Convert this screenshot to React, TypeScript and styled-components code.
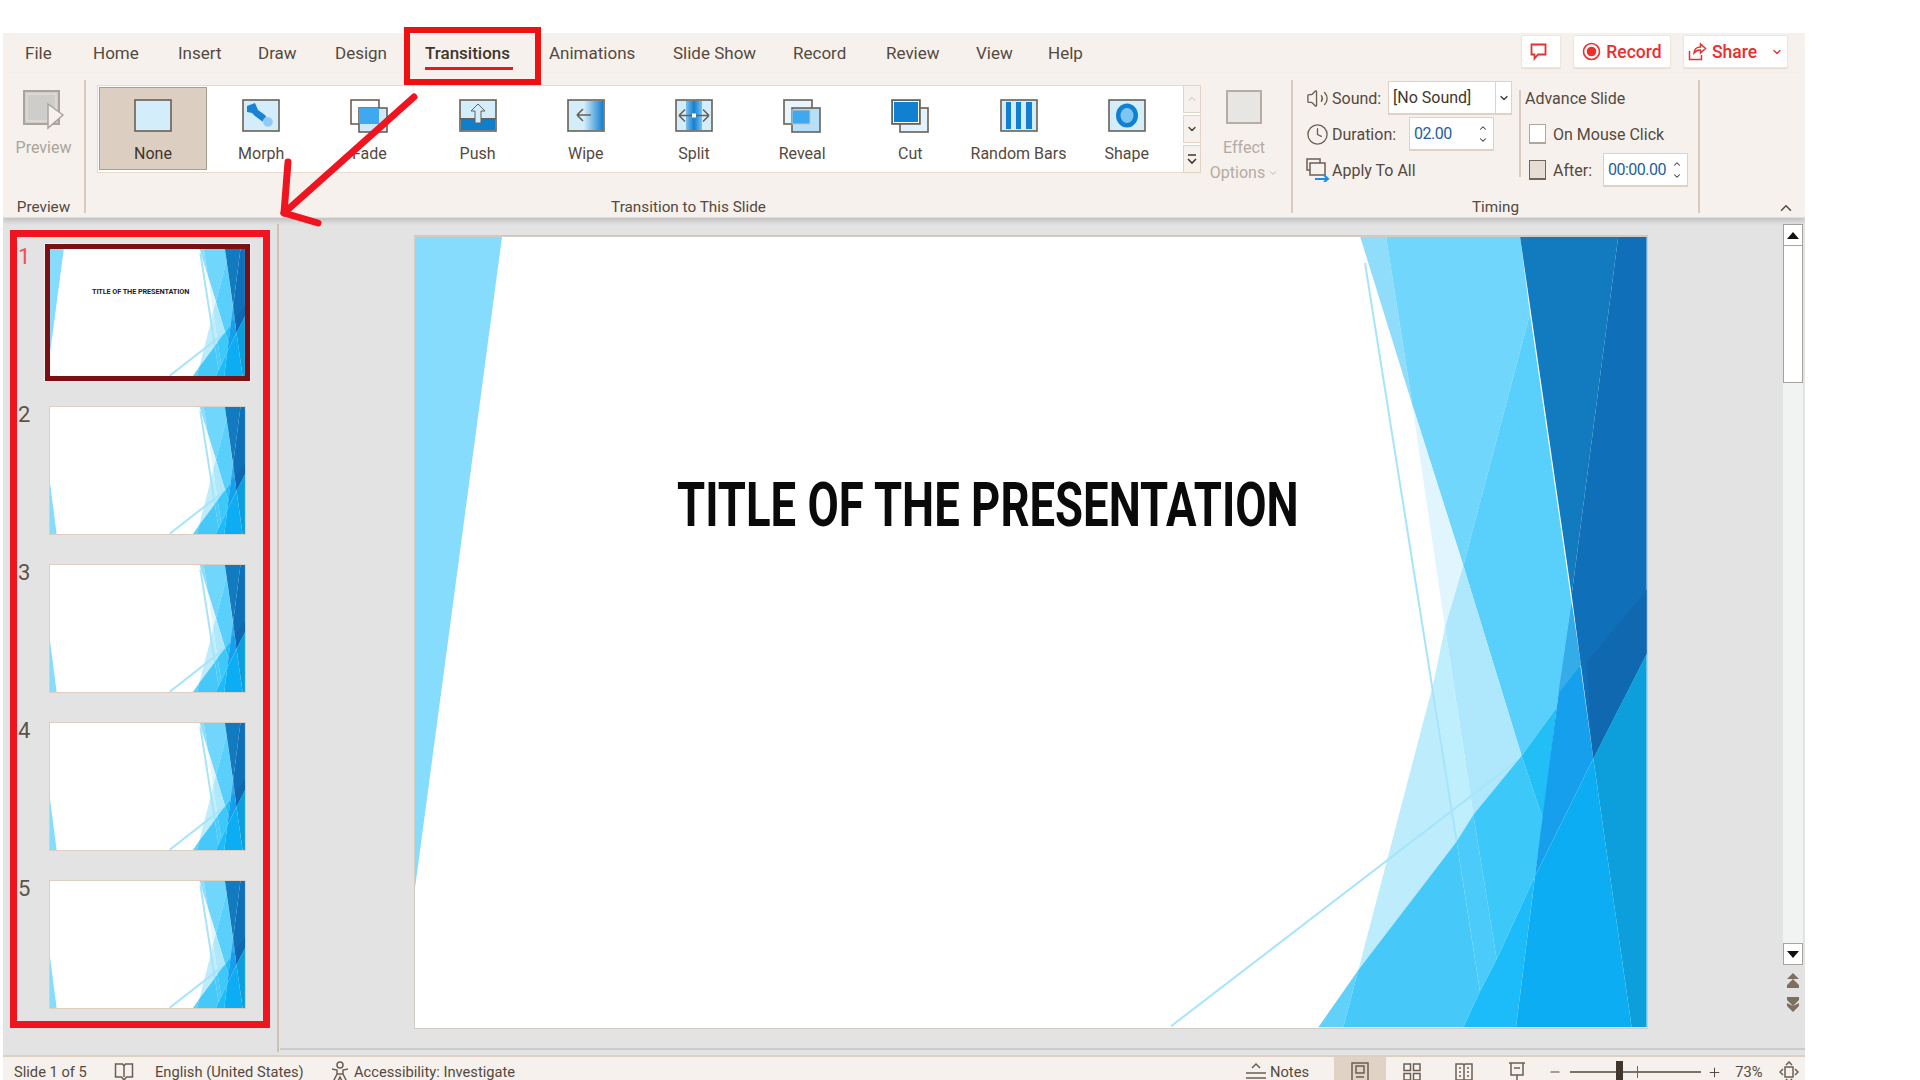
import React from "react"
import styled, { createGlobalStyle } from "styled-components"
import { ChevronDown, ChevronUp, Clock, Minus, Plus, Volume2 } from "lucide-react"

const GlobalStyle = createGlobalStyle`
  html, body {
    margin: 0;
    background: #fff;
    overflow: hidden;
  }
  * { box-sizing: border-box; }
`

const RIBBON = "#f6f1ec"
const INK = "#54493f"
const EDGE = "#d8cabd"

const Page = styled.div`
  position: relative;
  width: 1920px;
  height: 1080px;
  padding: 33px 0 0 3px;
  font-family: Roboto, "Liberation Sans", sans-serif;
  color: ${INK};
  font-size: 17px;
  overflow: hidden;
`
const App = styled.div`
  width: 1802px;
  height: 1047px;
  display: flex;
  flex-direction: column;
  overflow: hidden;
`

/* tabs */
const TabBar = styled.div`
  height: 40px;
  flex: none;
  background: ${RIBBON};
  display: flex;
  align-items: center;
  padding: 0 17px 0 22px;
`
const Tab = styled.div<{ $w?: number; $active?: boolean }>`
  width: ${(p) => (p.$w ? `${p.$w}px` : "auto")};
  font-size: 17px;
  line-height: 40px;
  flex: none;
  position: relative;
  color: ${(p) => (p.$active ? "#40362e" : INK)};
  font-weight: ${(p) => (p.$active ? 500 : 400)};
`
const TabUnderline = styled.span`
  position: absolute;
  left: 0;
  top: 34px;
  width: 88px;
  height: 3px;
  background: #e01b22;
`
const TopActions = styled.div`
  margin-left: auto;
  display: flex;
  gap: 12px;
  align-self: flex-start;
  padding-top: 2px;
`
const TopButton = styled.div<{ $w: number; $nudge?: number }>`
  width: ${(p) => p.$w}px;
  height: 33px;
  background: #fff;
  border: 1px solid #efe6dd;
  border-radius: 2px;
  box-shadow: 0 1px 1px #e6dbd0;
  display: flex;
  align-items: center;
  justify-content: center;
  gap: 5px;
  padding-right: ${(p) => p.$nudge ?? 0}px;
  color: #e8302e;
  font-size: 17.5px;
  font-weight: 500;
`

/* ribbon */
const Ribbon = styled.div`
  height: 145px;
  flex: none;
  background: ${RIBBON};
  display: flex;
  position: relative;
  z-index: 1;
  border-bottom: 1px solid #eadfd4;
  box-shadow: 0 3px 5px rgba(0, 0, 0, 0.16);
`
const Sep = styled.div<{ $top?: number; $h?: number }>`
  width: 2px;
  flex: none;
  margin-top: ${(p) => p.$top ?? 7}px;
  height: ${(p) => p.$h ?? 133}px;
  background: ${EDGE};
`
const Group = styled.div<{ $w: number }>`
  width: ${(p) => p.$w}px;
  flex: none;
  display: flex;
  flex-direction: column;
  justify-content: space-between;
`
const GroupLabel = styled.div`
  text-align: center;
  font-size: 15.3px;
  line-height: 20px;
  height: 20px;
`
const PreviewButton = styled.div`
  display: flex;
  flex-direction: column;
  align-items: center;
  padding-top: 17px;
  gap: 8px;
  color: #aaa49d;
  font-size: 16px;
  line-height: 20px;
`
const TransitionRow = styled.div`
  display: flex;
  padding: 12px 0 0 11px;
`
const Gallery = styled.div`
  width: 1104px;
  height: 88px;
  background: #fff;
  border: 1px solid #e7dbcf;
  padding: 2px 0 2px 2px;
  display: flex;
`
const GalleryGrid = styled.div`
  display: grid;
  grid-template-columns: repeat(10, 108.2px);
  width: 1082px;
  flex: none;
`
const GalleryItem = styled.div<{ $selected?: boolean }>`
  width: 106px;
  height: 81px;
  display: flex;
  flex-direction: column;
  align-items: center;
  padding-top: 11px;
  gap: 11px;
  font-size: 16px;
  line-height: 20px;
  white-space: nowrap;
  background: ${(p) => (p.$selected ? "#dccec1" : "transparent")};
  outline: ${(p) => (p.$selected ? "1px solid #ab9d8f" : "none")};
  color: ${(p) => (p.$selected ? "#3e342c" : INK)};
`
const GalleryScroll = styled.div`
  margin: -3px -1px -3px auto;
  width: 18px;
  display: flex;
  flex-direction: column;
  gap: 2px;
`
const ScrollStep = styled.div<{ $muted?: boolean }>`
  height: 28px;
  background: ${RIBBON};
  border: 1px solid #e2d5c8;
  display: flex;
  align-items: center;
  justify-content: center;
  color: ${(p) => (p.$muted ? "#c4bcb4" : "#40362e")};
`
const EffectOptions = styled.div`
  width: 86px;
  display: flex;
  flex-direction: column;
  align-items: center;
  padding-top: 5px;
  color: #b3aba3;
  font-size: 16px;
  line-height: 24.5px;
`
const EffectIcon = styled.div`
  width: 36px;
  height: 34px;
  background: #e8e6e3;
  border: 2px solid #b6aea6;
  margin-bottom: 12px;
`
const OptionsLine = styled.div`
  display: flex;
  align-items: center;
  gap: 3px;
`

/* timing */
const TimingBody = styled.div`
  display: flex;
  padding-left: 13px;
`
const TimingCol = styled.div<{ $w: number }>`
  width: ${(p) => p.$w}px;
  flex: none;
  padding-top: 8px;
  display: flex;
  flex-direction: column;
  gap: 2px;
`
const TimingRow = styled.div<{ $indent?: number }>`
  height: 34px;
  display: flex;
  align-items: center;
  padding-left: ${(p) => p.$indent ?? 0}px;
  font-size: 16px;
`
const RowIcon = styled.span`
  width: 26px;
  flex: none;
  display: flex;
  align-items: center;
`
const RowLabel = styled.span<{ $w?: number }>`
  width: ${(p) => (p.$w ? `${p.$w}px` : "auto")};
  flex: none;
`
const Field = styled.div<{ $w: number; $blue?: boolean }>`
  width: ${(p) => p.$w}px;
  height: 34px;
  background: #fff;
  border: 1px solid #dfd2c5;
  border-bottom-width: 2px;
  display: flex;
  align-items: center;
  padding-left: 4px;
  font-size: 16px;
  letter-spacing: ${(p) => (p.$blue ? "-0.5px" : "0")};
  color: ${(p) => (p.$blue ? "#1f5f9c" : "#40362e")};
`
const FieldDrop = styled.span`
  margin-left: auto;
  width: 16px;
  height: 100%;
  border-left: 1px solid #dfd2c5;
  display: flex;
  align-items: center;
  justify-content: center;
  color: #40362e;
`
const Spinner = styled.span`
  margin-left: auto;
  width: 20px;
  display: flex;
  flex-direction: column;
  align-items: center;
  gap: 2px;
  color: #40362e;
`
const Check = styled.span<{ $on?: boolean }>`
  width: 17px;
  height: 20px;
  flex: none;
  margin-right: 7px;
  background: ${(p) => (p.$on ? "#e6ddd4" : "#fff")};
  border: 1px solid ${(p) => (p.$on ? "#6f655b" : "#b0a69c")};
  border-bottom-width: 2px;
`
const CollapseSlot = styled.div`
  flex: 1;
  display: flex;
  align-items: flex-end;
  padding: 0 0 0 77px;
  color: #54493f;
`

/* body */
const Workspace = styled.div`
  height: 837px;
  flex: none;
  background: #e3e3e3;
  display: flex;
`
const ThumbPanel = styled.div`
  width: 276px;
  flex: none;
  padding: 12px 0 0 7px;
  border-right: 2px solid #cbc3ba;
  margin-top: 6px;
  margin-bottom: 3px;
`
const ThumbFrame = styled.div`
  width: 260px;
  height: 798px;
  margin-top: -6px;
  border: 7px solid #ee1520;
  padding: 7px 0 0 28px;
  display: flex;
  flex-direction: column;
  gap: 21px;
`
const ThumbRow = styled.div`
  position: relative;
  display: flex;
`
const ThumbNumber = styled.span<{ $active?: boolean }>`
  position: absolute;
  left: -27px;
  top: 0;
  font-size: 22px;
  line-height: 26px;
  color: ${(p) => (p.$active ? "#f0504f" : "#5d5249")};
`
const Thumb = styled.div<{ $active?: boolean }>`
  width: 205px;
  height: 137px;
  border: 5px solid ${(p) => (p.$active ? "#7a1014" : "transparent")};
  box-shadow: ${(p) => (p.$active ? "0 0 0 1px #efefef" : "none")};
`
const ThumbSlide = styled.div<{ $active?: boolean }>`
  position: relative;
  width: 195px;
  height: 127px;
  background: #fff;
  outline: ${(p) => (p.$active ? "none" : "1px solid #dccfc2")};
`
const ThumbTitle = styled.div`
  position: absolute;
  left: 42px;
  top: 39px;
  font-size: 7.3px;
  line-height: 8px;
  font-weight: 700;
  white-space: nowrap;
  color: #1d1d2b;
  letter-spacing: -0.1px;
`
const Stage = styled.div`
  flex: 1;
  min-width: 0;
  display: flex;
  flex-direction: column;
  height: 832px;
  border-bottom: 2px solid #cbcbcb;
  margin-left: 1px;
`
const StageBody = styled.div`
  flex: 1;
  display: flex;
  padding-left: 135px;
`
const Slide = styled.div`
  position: relative;
  width: 1232px;
  height: 791px;
  margin-top: 19px;
  background: #fff;
  box-shadow: 0 0 0 1px #d2ccc5, 0 -1px 0 1px #c9c9c9;
`
const ArtSvg = styled.svg`
  position: absolute;
  inset: 0;
  width: 100%;
  height: 100%;
  display: block;
`
const SlideTitle = styled.div`
  position: absolute;
  left: 262px;
  top: 242px;
  font-size: 49px;
  line-height: 54px;
  font-weight: 700;
  color: #0a0a0a;
  white-space: nowrap;
  transform: scale(0.928, 1.24);
  transform-origin: left center;
`
const ScrollBar = styled.div`
  width: 20px;
  margin-left: 136px;
  padding-top: 6px;
  display: flex;
  flex-direction: column;
`
const ScrollArrow = styled.div`
  height: 22px;
  background: #fff;
  border: 1px solid #a8a29c;
  display: flex;
  align-items: center;
  justify-content: center;
`
const ScrollThumb = styled.div`
  height: 137px;
  background: #fff;
  border: 1px solid #a8a29c;
  border-top: none;
`
const ScrollTrack = styled.div`
  height: 560px;
  background: #f1f3f3;
`
const PageJumps = styled.div`
  display: flex;
  flex-direction: column;
  align-items: center;
  gap: 9px;
  padding-top: 8px;
`

/* status bar */
const StatusBar = styled.div`
  height: 25px;
  flex: none;
  background: ${RIBBON};
  border-top: 2px solid #dccfc3;
  display: flex;
  padding: 0 4px 0 11px;
  font-size: 14.7px;
  line-height: 14px;
  align-items: stretch;
`
const StatusItem = styled.div<{ $w?: number; $center?: boolean; $active?: boolean }>`
  width: ${(p) => (p.$w ? `${p.$w}px` : "auto")};
  flex: none;
  display: flex;
  align-items: center;
  gap: 3px;
  white-space: nowrap;
  padding-top: 7px;
  justify-content: ${(p) => (p.$center ? "center" : "flex-start")};
  background: ${(p) => (p.$active ? "#e0d2c5" : "transparent")};
`
const StatusRight = styled.div`
  margin-left: auto;
  display: flex;
`
const ZoomTrack = styled.div`
  position: relative;
  width: 131px;
  height: 2px;
  background: #7d7267;
  align-self: center;
  margin: 7px 5px 0 4px;
`
const ZoomKnob = styled.span`
  position: absolute;
  left: 46px;
  top: -10px;
  width: 7px;
  height: 22px;
  background: #40362e;
`
const ZoomTick = styled.span`
  position: absolute;
  left: 67px;
  top: -5px;
  width: 1px;
  height: 12px;
  background: #6d6258;
`

/* red annotations */
const TabHighlight = styled.div`
  position: absolute;
  z-index: 2;
  left: 404px;
  top: 27px;
  width: 137px;
  height: 58px;
  border: 6px solid #ee1111;
  pointer-events: none;
`
const ArrowSvg = styled.svg`
  position: absolute;
  z-index: 2;
  left: 270px;
  top: 90px;
`

const Frame = ({ x = 1, y = 1, w = 36, h = 31, fill = "#d3edfb" }) => (
  <rect x={x} y={y} width={w} height={h} fill={fill} stroke="#6b5f54" strokeWidth="1.6" />
)

const TransitionIcon = ({ kind }: { kind: string }) => {
  let inner: React.ReactNode = <Frame />
  if (kind === "Morph")
    inner = (
      <>
        <Frame />
        <path d="M5 7l8-3 3 7 7 5 2 3-4 4-8-6-3-3-5-1z" fill="#1b82d2" />
        <circle cx="26" cy="23" r="5" fill="#8fcbf3" stroke="#d3edfb" strokeDasharray="1 1" />
      </>
    )
  if (kind === "Fade")
    inner = (
      <>
        <rect x="1" y="1" width="28" height="24" fill="#fff" stroke="#6b5f54" strokeWidth="1.6" />
        <rect x="9" y="9" width="28" height="24" fill="#cde9fb" stroke="#6b5f54" strokeWidth="1.6" />
        <rect x="9" y="9" width="20" height="16" fill="#3fa9ef" />
      </>
    )
  if (kind === "Push")
    inner = (
      <>
        <Frame />
        <rect x="2" y="19" width="34" height="12" fill="#0f7fcd" />
        <rect x="1" y="19" width="36" height="1.5" fill="#6b5f54" />
        <path d="M19 5l7 7h-4v12h-6V12h-4z" fill="#d3edfb" stroke="#6b5f54" />
      </>
    )
  if (kind === "Wipe")
    inner = (
      <>
        <defs>
          <linearGradient id="wipe-fill">
            <stop offset="0" stopColor="#d3edfb" />
            <stop offset="1" stopColor="#1280d0" />
          </linearGradient>
        </defs>
        <Frame />
        <rect x="17" y="2" width="19" height="29" fill="url(#wipe-fill)" />
        <path d="M10 16l6-6M10 16l6 6M10 16h14" stroke="#6b5f54" strokeWidth="1.6" fill="none" />
      </>
    )
  if (kind === "Split")
    inner = (
      <>
        <defs>
          <linearGradient id="split-fill">
            <stop offset="0" stopColor="#7cc1ef" />
            <stop offset="0.5" stopColor="#1280d0" />
            <stop offset="1" stopColor="#7cc1ef" />
          </linearGradient>
        </defs>
        <Frame />
        <rect x="11" y="2" width="16" height="29" fill="url(#split-fill)" />
        <path d="M4 16.5h30M4 16.5l6-6M4 16.5l6 6M34 16.5l-6-6M34 16.5l-6 6" stroke="#6b5f54" strokeWidth="1.6" fill="none" />
        <rect x="17" y="14.500" width="4" height="4" fill="#fff" />
      </>
    )
  if (kind === "Reveal")
    inner = (
      <>
        <rect x="1" y="1" width="28" height="24" fill="#e8f5fd" stroke="#6b5f54" strokeWidth="1.6" />
        <rect x="9" y="9" width="28" height="24" fill="#b5e0f9" stroke="#6b5f54" strokeWidth="1.6" />
        <rect x="9" y="11" width="18" height="14" fill="#3fa9ef" stroke="#c9c0b6" />
      </>
    )
  if (kind === "Cut")
    inner = (
      <>
        <rect x="9" y="9" width="28" height="24" fill="#e3f3fd" stroke="#6b5f54" strokeWidth="1.6" />
        <rect x="1" y="1" width="28" height="24" fill="#1280d0" stroke="#6b5f54" strokeWidth="1.6" />
        <rect x="2.5" y="2.5" width="25" height="21" fill="none" stroke="#fff" strokeWidth="1" />
      </>
    )
  if (kind === "Random Bars")
    inner = (
      <>
        <Frame />
        <rect x="6" y="3" width="5" height="27" fill="#1280d0" />
        <rect x="16" y="3" width="5" height="27" fill="#1280d0" />
        <rect x="26" y="3" width="6" height="27" fill="#1280d0" />
      </>
    )
  if (kind === "Shape")
    inner = (
      <>
        <Frame />
        <ellipse cx="19" cy="16.5" rx="11" ry="12" fill="#1280d0" />
        <ellipse cx="19" cy="16.5" rx="6.5" ry="7.5" fill="#7cc6f2" />
      </>
    )
  return (
    <svg width="38" height="34" viewBox="0 0 38 34">
      {inner}
    </svg>
  )
}

const SlideArt = ({ leftBar }: { leftBar: "top" | "bottom" }) => (
  <ArtSvg viewBox="0 0 1232 791" preserveAspectRatio="none">
    {leftBar === "top" ? (
      <polygon points="0,0 87,0 0,651" fill="#86dcfd" />
    ) : (
      <polygon points="0,473 42,791 0,791" fill="#86dcfd" />
    )}
    <g transform="translate(885 -17) scale(0.3333 0.5357)">
      <polygon points="180,30 258,30 337,345" fill="#8fddfb" />
      <polygon points="258,30 660,30 690,175 490,645 337,345" fill="#71d6fb" />
      <polygon points="337,345 490,645 435,760" fill="#e0f5fe" />
      <polygon points="690,175 815,715 770,910 665,1000 490,645" fill="#59cffb" />
      <polygon points="490,645 665,1000 520,1110 435,760" fill="#afe8fc" />
      <polygon points="400,865 435,760 520,1110 470,1160" fill="#bfeefd" />
      <polygon points="400,865 470,1160 175,1400" fill="#bdecfd" />
      <line x1="195" y1="80" x2="470" y2="1160" stroke="#a6e4fb" strokeWidth="2" vectorEffect="non-scaling-stroke" />
      <line x1="-387" y1="1505" x2="650" y2="1010" stroke="#a6e4fb" strokeWidth="2" vectorEffect="non-scaling-stroke" />
      <polygon points="55,1507 130,1507 175,1400" fill="#62d1f9" />
      <polygon points="130,1507 175,1400 470,1160 540,1440 490,1507" fill="#46c9f9" />
      <polygon points="470,1160 520,1110 590,1380 540,1440" fill="#4bcbfa" />
      <polygon points="520,1110 665,1000 730,1120 705,1225 590,1380" fill="#3dc8fa" />
      <polygon points="665,1000 770,910 730,1120" fill="#22bef6" />
      <polygon points="815,715 880,1005 705,1225 770,910" fill="#159fec" />
      <polygon points="815,715 843,830 775,885" fill="#33ace9" />
      <polygon points="660,30 955,30 815,700" fill="#127bc0" />
      <polygon points="955,30 1040,30 1040,810 880,1005 815,700" fill="#0f70b9" />
      <polygon points="860,825 1040,690 1040,810 880,1005" fill="#1069b0" />
      <polygon points="880,1005 1040,810 1040,1507 995,1507" fill="#0c9fdc" />
      <polygon points="880,1005 995,1507 648,1507 705,1225" fill="#0cadf2" />
      <polygon points="705,1225 648,1507 490,1507 540,1440 590,1380" fill="#1bbcf9" />
    </g>
  </ArtSvg>
)

const Glyph = ({ w, h, children }: { w: number; h: number; children: React.ReactNode }) => (
  <svg width={w} height={h} viewBox={`0 0 ${w} ${h}`} fill="none" stroke="#6b5f54" strokeWidth="1.5">
    {children}
  </svg>
)

const tabs: [string, number][] = [
  ["File", 68],
  ["Home", 85],
  ["Insert", 80],
  ["Draw", 77],
  ["Design", 90],
  ["Transitions", 124],
  ["Animations", 124],
  ["Slide Show", 120],
  ["Record", 93],
  ["Review", 90],
  ["View", 72],
  ["Help", 60],
]
const transitions = ["None", "Morph", "Fade", "Push", "Wipe", "Split", "Reveal", "Cut", "Random Bars", "Shape"]

const App_ = () => {
  return (
    <Page>
      <GlobalStyle />
      <App>
        <TabBar>
          {tabs.map(([name, w]) => (
            <Tab key={name} $w={w} $active={name === "Transitions"}>
              {name}
              {name === "Transitions" && <TabUnderline />}
            </Tab>
          ))}
          <TopActions>
            <TopButton $w={40} $nudge={5}>
              <svg width="17" height="18" viewBox="0 0 17 18" fill="none" stroke="#e8302e" strokeWidth="1.8">
                <path d="M1.5 1.5h14v10H8l-3.500 4v-4h-3z" />
              </svg>
            </TopButton>
            <TopButton $w={98}>
              <svg width="19" height="19" viewBox="0 0 19 19">
                <circle cx="9.500" cy="9.500" r="8" fill="none" stroke="#e8302e" strokeWidth="1.600" />
                <circle cx="9.500" cy="9.500" r="4.800" fill="#e8302e" />
              </svg>
              Record
            </TopButton>
            <TopButton $w={105}>
              <svg width="19" height="19" viewBox="0 0 19 19" fill="none" stroke="#e8302e" strokeWidth="1.500">
                <path d="M1.500 9v8.500h12V13M6 11c0-4 3-6 6.500-6V2l5 4.500-5 4.500V8C9.500 8 7.500 9 6 11z" />
              </svg>
              Share
              <ChevronDown size={12} strokeWidth={2.500} style={{ marginLeft: 9 }} />
            </TopButton>
          </TopActions>
        </TabBar>

        <Ribbon>
          <Group $w={81}>
            <PreviewButton>
              <svg width="42" height="40" viewBox="0 0 42 40">
                <rect x="1" y="1" width="35" height="33" fill="#cfcdca" stroke="#aaa49d" strokeWidth="2" />
                <rect x="4" y="4" width="29" height="27" fill="none" stroke="#e5e2de" />
                <path d="M25 14l15 11-15 13z" fill="#f6f1ec" stroke="#aaa49d" strokeWidth="1.500" />
              </svg>
              Preview
            </PreviewButton>
            <GroupLabel>Preview</GroupLabel>
          </Group>
          <Sep />
          <Group $w={1205}>
            <TransitionRow>
              <Gallery>
                <GalleryGrid>
                  {transitions.map((name) => (
                    <GalleryItem key={name} $selected={name === "None"}>
                      <TransitionIcon kind={name} />
                      {name}
                    </GalleryItem>
                  ))}
                </GalleryGrid>
                <GalleryScroll>
                  <ScrollStep $muted>
                    <ChevronUp size={12} strokeWidth={2} />
                  </ScrollStep>
                  <ScrollStep>
                    <ChevronDown size={12} strokeWidth={2.500} />
                  </ScrollStep>
                  <ScrollStep>
                    <svg width="12" height="13" viewBox="0 0 12 13" fill="none" stroke="#40362e" strokeWidth="1.600">
                      <path d="M2 2h8M2 6l4 4 4-4" />
                    </svg>
                  </ScrollStep>
                </GalleryScroll>
              </Gallery>
              <EffectOptions>
                <EffectIcon />
                Effect
                <OptionsLine>
                  Options
                  <ChevronDown size={10} strokeWidth={2} />
                </OptionsLine>
              </EffectOptions>
            </TransitionRow>
            <GroupLabel>Transition to This Slide</GroupLabel>
          </Group>
          <Sep />
          <Group $w={405}>
            <TimingBody>
              <TimingCol $w={213}>
                <TimingRow>
                  <RowIcon>
                    <Volume2 size={23} strokeWidth={1.400} color="#6b5f54" />
                  </RowIcon>
                  <RowLabel $w={56}>Sound:</RowLabel>
                  <Field $w={124}>
                    [No Sound]
                    <FieldDrop>
                      <ChevronDown size={12} strokeWidth={2.500} />
                    </FieldDrop>
                  </Field>
                </TimingRow>
                <TimingRow>
                  <RowIcon>
                    <Clock size={23} strokeWidth={1.400} color="#6b5f54" />
                  </RowIcon>
                  <RowLabel $w={77}>Duration:</RowLabel>
                  <Field $w={85} $blue>
                    02.00
                    <Spinner>
                      <ChevronUp size={10} strokeWidth={2.500} />
                      <ChevronDown size={10} strokeWidth={2.500} />
                    </Spinner>
                  </Field>
                </TimingRow>
                <TimingRow>
                  <RowIcon>
                    <Glyph w={24} h={24}>
                      <rect x="1" y="1" width="13" height="11" />
                      <rect x="4" y="5" width="15" height="12" fill="#f6f1ec" />
                      <path d="M9 21h13M18 17l4 4-4 3" stroke="#1b8fe6" strokeWidth="2" />
                    </Glyph>
                  </RowIcon>
                  <RowLabel>Apply To All</RowLabel>
                </TimingRow>
              </TimingCol>
              <Sep $top={17} $h={87} />
              <TimingCol $w={170}>
                <TimingRow $indent={4}>
                  <RowLabel>Advance Slide</RowLabel>
                </TimingRow>
                <TimingRow $indent={8}>
                  <Check />
                  <RowLabel>On Mouse Click</RowLabel>
                </TimingRow>
                <TimingRow $indent={8}>
                  <Check $on />
                  <RowLabel $w={50}>After:</RowLabel>
                  <Field $w={85} $blue>
                    00:00.00
                    <Spinner>
                      <ChevronUp size={10} strokeWidth={2.500} />
                      <ChevronDown size={10} strokeWidth={2.500} />
                    </Spinner>
                  </Field>
                </TimingRow>
              </TimingCol>
            </TimingBody>
            <GroupLabel>Timing</GroupLabel>
          </Group>
          <Sep />
          <CollapseSlot>
            <ChevronUp size={18} strokeWidth={2} />
          </CollapseSlot>
        </Ribbon>

        <Workspace>
          <ThumbPanel>
            <ThumbFrame>
              {[1, 2, 3, 4, 5].map((n) => (
                <ThumbRow key={n}>
                  <ThumbNumber $active={n === 1}>{n}</ThumbNumber>
                  <Thumb $active={n === 1}>
                    <ThumbSlide $active={n === 1}>
                      <SlideArt leftBar={n === 1 ? "top" : "bottom"} />
                      {n === 1 && <ThumbTitle>TITLE OF THE PRESENTATION</ThumbTitle>}
                    </ThumbSlide>
                  </Thumb>
                </ThumbRow>
              ))}
            </ThumbFrame>
          </ThumbPanel>
          <Stage>
            <StageBody>
              <Slide>
                <SlideArt leftBar="top" />
                <SlideTitle>TITLE OF THE PRESENTATION</SlideTitle>
              </Slide>
              <ScrollBar>
                <ScrollArrow>
                  <svg width="12" height="7" viewBox="0 0 12 7">
                    <path d="M6 0l6 7H0z" fill="#111" />
                  </svg>
                </ScrollArrow>
                <ScrollThumb />
                <ScrollTrack />
                <ScrollArrow>
                  <svg width="12" height="7" viewBox="0 0 12 7">
                    <path d="M0 0h12L6 7z" fill="#111" />
                  </svg>
                </ScrollArrow>
                <PageJumps>
                  <svg width="12" height="15" viewBox="0 0 12 15">
                    <path d="M6 0l6 6H0zM6 6l6 6v3H0v-3z" fill="#7d6e60" />
                  </svg>
                  <svg width="12" height="15" viewBox="0 0 12 15">
                    <path d="M0 0h12v3L6 9 0 3zM0 6l6 3 6-3v3l-6 6-6-6z" fill="#7d6e60" />
                  </svg>
                </PageJumps>
              </ScrollBar>
            </StageBody>
          </Stage>
        </Workspace>

        <StatusBar>
          <StatusItem $w={100}>Slide 1 of 5</StatusItem>
          <StatusItem $w={41}>
            <Glyph w={20} h={20}>
              <path d="M1.500 2h7l1.500 2 1.500-2h7v13h-6l-2.500 3-2.500-3h-6zM10 4v11" />
            </Glyph>
          </StatusItem>
          <StatusItem $w={175}>English (United States)</StatusItem>
          <StatusItem $w={24}>
            <Glyph w={20} h={22}>
              <circle cx="10" cy="4" r="3" />
              <path d="M2 8l5 1v4l-4 8M18 8l-5 1v4l4 8M7 13h6M8 20l2-4 2 4" />
            </Glyph>
          </StatusItem>
          <StatusItem>Accessibility: Investigate</StatusItem>
          <StatusRight>
            <StatusItem $w={89}>
              <Glyph w={22} h={20}>
                <path d="M7 6l4-4 4 4M1 11h20M1 16h20" />
              </Glyph>
              Notes
            </StatusItem>
            <StatusItem $w={52} $center $active>
              <Glyph w={18} h={20}>
                <rect x="1" y="1" width="16" height="18" />
                <rect x="5" y="4" width="8" height="7" />
                <path d="M5 15h8" />
              </Glyph>
            </StatusItem>
            <StatusItem $w={52} $center>
              <Glyph w={18} h={18}>
                <rect x="1" y="1" width="6.500" height="6.500" />
                <rect x="10.500" y="1" width="6.500" height="6.500" />
                <rect x="1" y="10.500" width="6.500" height="6.500" />
                <rect x="10.500" y="10.500" width="6.500" height="6.500" />
              </Glyph>
            </StatusItem>
            <StatusItem $w={52} $center>
              <Glyph w={18} h={20}>
                <path d="M1 2h7l1 1 1-1h7v16h-7l-1 1-1-1H1zM9 3v16M4 6h2M4 10h2M4 14h2M12 6h2M12 10h2M12 14h2" />
              </Glyph>
            </StatusItem>
            <StatusItem $w={54} $center>
              <Glyph w={18} h={22}>
                <path d="M1 2h16M3 2v12h12V2M6 7h6M9 14v5M5 20h8" />
              </Glyph>
            </StatusItem>
            <StatusItem $w={22} $center>
              <Minus size={14} strokeWidth={2} />
            </StatusItem>
            <ZoomTrack>
              <ZoomKnob />
              <ZoomTick />
            </ZoomTrack>
            <StatusItem $w={16} $center>
              <Plus size={15} strokeWidth={1.600} />
            </StatusItem>
            <StatusItem $w={54} $center>73%</StatusItem>
            <StatusItem $w={25} $center>
              <Glyph w={20} h={22}>
                <rect x="6" y="6" width="8" height="10" />
                <path d="M7 4l3-3 3 3M7 18l3 3 3-3M4 8l-3 3 3 3M16 8l3 3-3 3" />
              </Glyph>
            </StatusItem>
          </StatusRight>
        </StatusBar>
      </App>

      <TabHighlight />
      <ArrowSvg width="160" height="140" viewBox="0 0 160 140" fill="none" stroke="#ee1520" strokeWidth="7" strokeLinecap="round" strokeLinejoin="round">
        <path d="M144 7L14 123" />
        <path d="M18 72l-4 51 34 10" />
      </ArrowSvg>
    </Page>
  )
}

export default App_
